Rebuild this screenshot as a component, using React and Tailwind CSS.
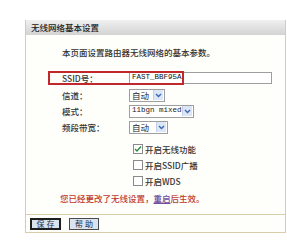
import React from "react";

const cjk = { fontFamily: '"Noto Sans CJK SC", "Liberation Sans", sans-serif' };

const Chevron = () => (
  <span className="flex h-[10px] w-[10px] items-center justify-center bg-[#dbe6f7] border-l border-[#c2cfe4]">
    <svg width="7" height="5" viewBox="0 0 7 5">
      <path d="M1 1 L3.5 3.5 L6 1" fill="none" stroke="#3e67b3" strokeWidth="1.4" />
    </svg>
  </span>
);

const Select = ({ value, width, mono }) => (
  <div
    className={`flex h-[13px] items-center justify-between border border-[#9e9e9e] bg-white pl-[2px] pr-[1px] ${width}`}
  >
    <span
      className={mono ? "text-[7.5px] leading-none text-[#222]" : "text-[8.5px] leading-none text-[#222]"}
      style={mono ? { fontFamily: '"Liberation Mono", monospace' } : cjk}
    >
      {value}
    </span>
    <Chevron />
  </div>
);

const Row = ({ label, children, className = "" }) => (
  <div className={`flex items-center ${className}`}>
    <div className="w-[103px] pl-[36px] shrink-0 whitespace-nowrap text-[8.5px] font-medium text-[#333]">{label}</div>
    {children}
  </div>
);

const Check = ({ checked, label }) => (
  <div className="flex h-[16px] items-center pl-[107px]">
    <span className="flex h-[10px] w-[10px] items-center justify-center border border-[#8a8a8a] bg-white">
      {checked && (
        <svg width="8" height="8" viewBox="0 0 8 8">
          <path d="M1 4 L3 6 L7 1.5" fill="none" stroke="#2e8b3a" strokeWidth="1.4" />
        </svg>
      )}
    </span>
    <span className="ml-[2px] text-[8.5px] font-medium text-[#333]">{label}</span>
  </div>
);

export default function App() {
  return (
    <div className="h-[240px] w-[287px] overflow-hidden bg-white pl-[25px] pt-[20px]" style={cjk}>
      <div className="w-[261px] border-l border-r border-b border-[#d8cda9] bg-[#fefefb]">
        <div className="flex h-[15px] items-center bg-gradient-to-b from-[#f0f0f0] to-[#d3d3d3] pl-[5px] text-[8.5px] font-medium text-[#222]">
          无线网络基本设置
        </div>
        <div className="pb-[9px] pt-[10px]">
          <div className="h-[14px] pl-[36px] text-[8.5px] font-medium leading-[14px] text-[#333]">
            本页面设置路由器无线网络的基本参数。
          </div>
          <div className="relative mt-[13px]">
            <Row label="SSID号：" className="h-[12px]">
              <div className="flex h-[12px] w-[143px] items-center border border-[#9e9e9e] bg-white pl-[2px]">
                <span className="text-[7.5px] leading-none text-[#111]" style={{ fontFamily: '"Liberation Mono", monospace' }}>
                  FAST_BBF95A
                </span>
              </div>
            </Row>
            <div className="absolute left-[22px] top-[-1px] h-[14px] w-[136px] border-2 border-[#c0282c]" />
          </div>
          <Row label="信道：" className="mt-[3px] h-[16px]">
            <Select value="自动" width="w-[36px]" />
          </Row>
          <Row label="模式：" className="h-[16px]">
            <Select value="11bgn mixed" width="w-[65px]" mono />
          </Row>
          <Row label="频段带宽：" className="h-[16px]">
            <Select value="自动" width="w-[39px]" />
          </Row>
          <div className="mt-[6px]">
            <Check checked label="开启无线功能" />
            <Check label="开启SSID广播" />
            <Check label="开启WDS" />
          </div>
          <div className="mt-[2px] flex h-[14px] items-center pl-[34px] text-[8.5px] font-medium text-[#c0392b]">
            您已经更改了无线设置，
            <span className="text-[#6b4fa0] underline">重启</span>
            后生效。
          </div>
        </div>
        <div className="flex h-[18px] items-center gap-[8px] border-t border-[#d8cda9] pl-[4px]">
          <button className="flex h-[12px] w-[31px] items-center justify-center border-2 border-[#1e1e1e] bg-[#d9e4ee] text-[8px] leading-none text-[#1d2c4a]">
            保 存
          </button>
          <button className="flex h-[12px] w-[30px] items-center justify-center border border-[#4a4a4a] bg-[#d9e4ee] text-[8px] leading-none text-[#1d2c4a]">
            帮 助
          </button>
        </div>
      </div>
    </div>
  );
}
